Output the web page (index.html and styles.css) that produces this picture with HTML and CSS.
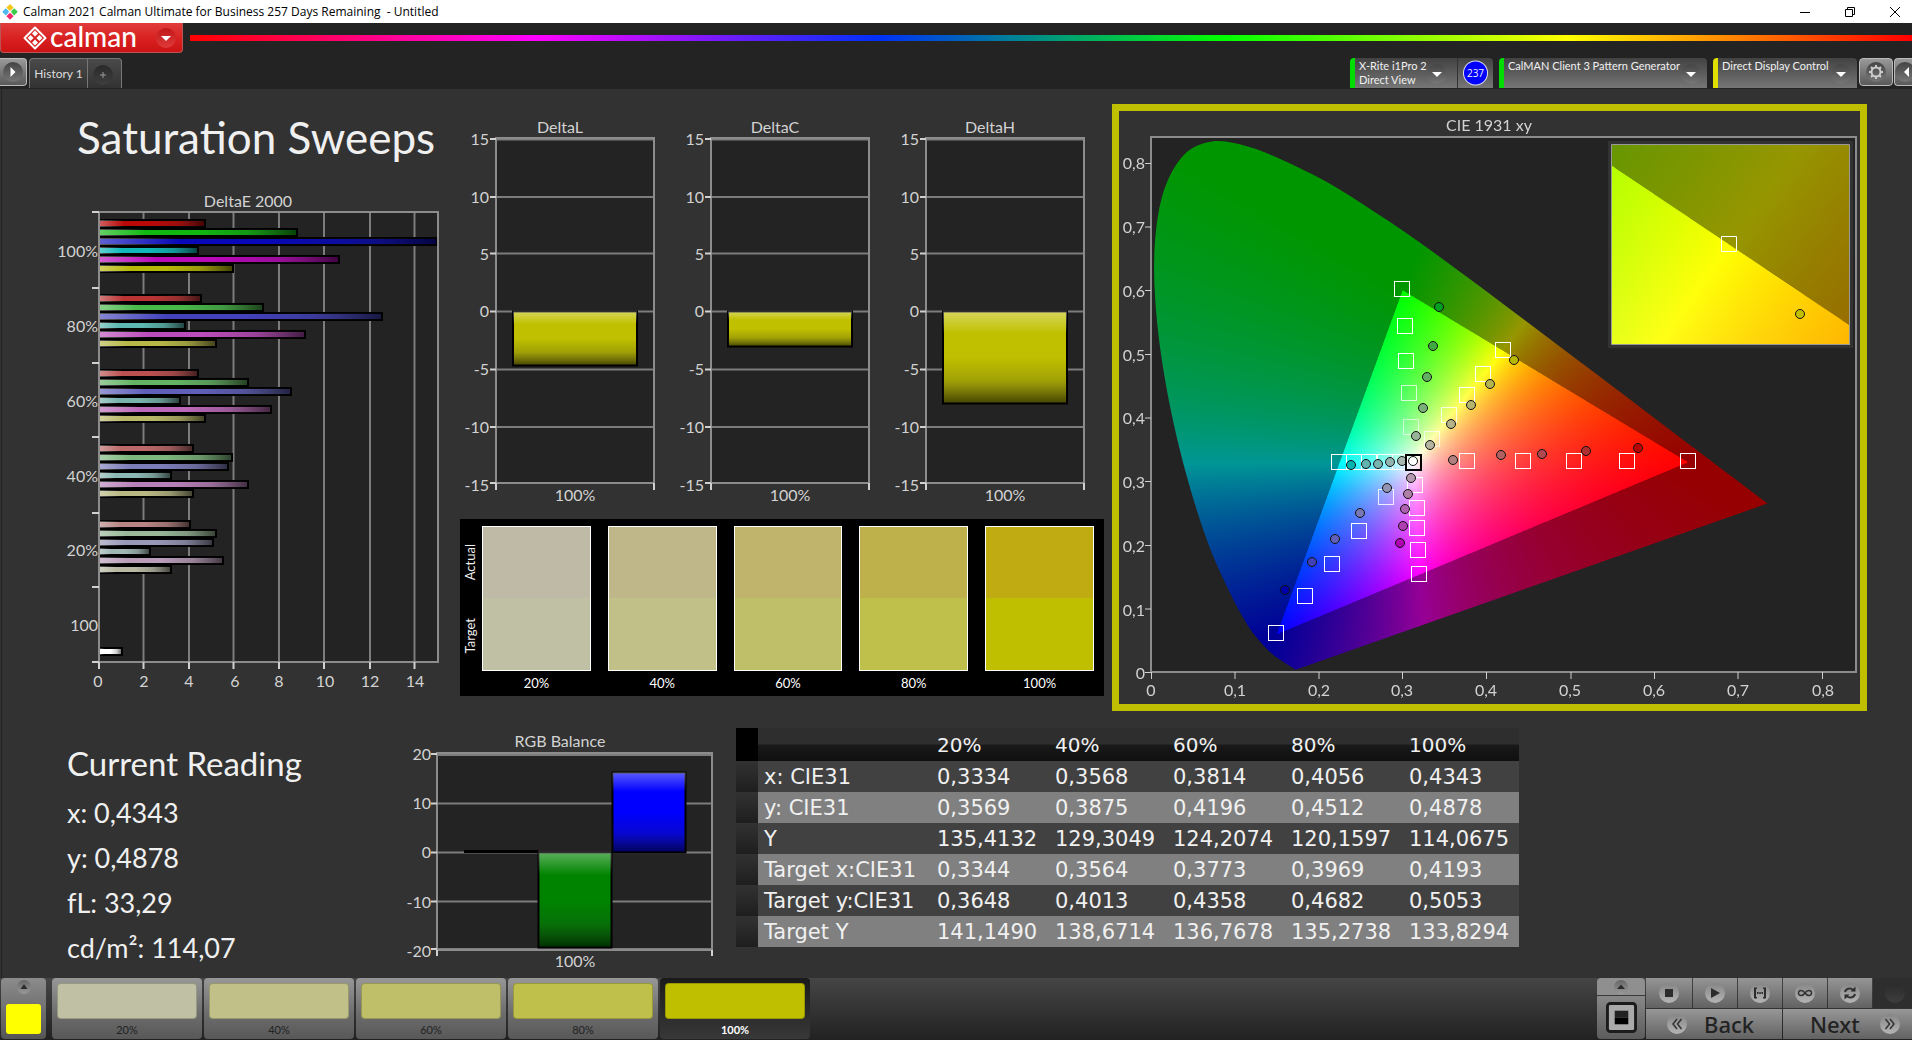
FILE: index.html
```html
<!DOCTYPE html>
<html lang="en">
<head>
<meta charset="utf-8">
<title>Calman 2021 - Untitled</title>
<link rel="stylesheet" href="styles.css">
</head>
<body>
<header class="titlebar">
  <svg class="app-icon" viewBox="0 0 16 16" aria-hidden="true">
    <path fill="#f5c518" d="M8 0l3.600 3.600L8 7.200 4.400 3.600z"/><path fill="#4fb8f0" d="M3.800 4.200L7.400 7.800 3.800 11.400.2 7.800z"/>
    <path fill="#3ccb4a" d="M12.200 4.200l3.600 3.600-3.600 3.600-3.600-3.600z"/><path fill="#f0286e" d="M8 8.600l3.600 3.600L8 15.800l-3.600-3.600z"/>
    <path fill="#fff" d="M8 6.200l1.700 1.700L8 9.600 6.300 7.900z"/>
  </svg>
  <h1 class="window-title">Calman 2021 Calman Ultimate for Business 257 Days Remaining&nbsp; - Untitled</h1>
  <div class="window-controls">
    <button class="window-button" aria-label="Minimize"><svg viewBox="0 0 12 12"><path d="M1 6.500h10"/></svg></button>
    <button class="window-button" aria-label="Restore"><svg viewBox="0 0 12 12"><path d="M1.500 3.500h7v7h-7zM3.500 3.500v-2h7v7h-2"/></svg></button>
    <button class="window-button" aria-label="Close"><svg viewBox="0 0 12 12"><path d="M1 1l10 10M11 1L1 11"/></svg></button>
  </div>
</header>

<div class="brandbar">
  <button class="brand">
    <svg class="brand-mark" viewBox="0 0 24 24" aria-hidden="true">
      <path d="M12 1.500L22.500 12 12 22.500 1.500 12z" fill="none" stroke="#fff" stroke-width="2" stroke-linejoin="round"/>
      <path fill="#fff" d="M12 4.500l3 3-3 3-3-3zM7.600 9l3 3-3 3-3-3zM16.400 9l3 3-3 3-3-3zM12 13.500l3 3-3 3-3-3z"/>
    </svg>
    <span class="brand-name">calman</span>
    <span class="disc disc-red"><svg viewBox="0 0 20 20"><path d="M5 8h10l-5 5z"/></svg></span>
  </button>
  <div class="rainbow"></div>
</div>

<nav class="toolbar">
  <button class="edge-button" aria-label="Show panel"><span class="disc"><svg viewBox="0 0 20 20"><path d="M7.500 5l5 5-5 5z"/></svg></span></button>
  <div class="tabs">
    <button class="tab">History 1</button>
    <button class="tab tab-add" aria-label="Add history"><span class="disc disc-dark"><svg viewBox="0 0 20 20"><path d="M9.500 7h1v2.500H13v1h-2.500V13h-1v-2.500H7v-1h2.500z"/></svg></span></button>
  </div>
  <div class="devices">
    <div class="device device-meter">
      <button class="device-main"><span class="device-name">X-Rite i1Pro 2<br>Direct View</span><span class="disc"><svg viewBox="0 0 20 20"><path d="M5 8h10l-5 5z"/></svg></span></button>
      <span class="meter-count">237</span>
    </div>
    <div class="device device-source">
      <button class="device-main"><span class="device-name">CalMAN Client 3 Pattern Generator</span><span class="disc"><svg viewBox="0 0 20 20"><path d="M5 8h10l-5 5z"/></svg></span></button>
    </div>
    <div class="device device-display">
      <button class="device-main"><span class="device-name">Direct Display Control</span><span class="disc"><svg viewBox="0 0 20 20"><path d="M5 8h10l-5 5z"/></svg></span></button>
    </div>
    <div class="edge-group">
      <button class="square-button" aria-label="Settings"><span class="disc"><svg viewBox="0 0 20 20"><circle cx="10" cy="10" r="4.500" fill="none" stroke="#ccc" stroke-width="2"/><path fill="none" stroke="#ccc" stroke-width="2" d="M10 3v2M10 15v2M3 10h2M15 10h2M5 5l1.500 1.500M13.500 13.500L15 15M5 15l1.500-1.500M13.500 6.500L15 5"/></svg></span></button>
      <button class="square-button square-cut" aria-label="Expand"><span class="disc"><svg viewBox="0 0 20 20"><path d="M14 5l-5 5 5 5z"/></svg></span></button>
    </div>
  </div>
</nav>

<main class="workspace">
  <div class="row row-top">
    <section class="col-sweeps">
      <h2 class="page-title">Saturation Sweeps</h2>
      <svg class="chart" id="delta-e" viewBox="0 0 404 512" role="img" aria-label="DeltaE 2000">
        <text class="t mid" x="192" y="19">DeltaE 2000</text>
        <rect class="plot" x="43" y="24" width="339" height="450"/>
        <path class="grid" d="M87.500 24v450M133 24v450M177.500 24v450M223 24v450M268 24v450M314 24v450M358.500 24v450"/>
        <g id="delta-e-bars"></g>
        <path class="frame" d="M43 24h339v450H43z"/>
        <path class="tick" d="M36 24h7M36 100h7M36 175h7M36 249h7M36 325h7M36 399h7M36 474h7M43 474v7M87.500 474v7M133 474v7M177.500 474v7M223 474v7M268 474v7M314 474v7M358.500 474v7"/>
        <g class="t end"><text x="42" y="69">100%</text><text x="42" y="144">80%</text><text x="42" y="219">60%</text><text x="42" y="294">40%</text><text x="42" y="368">20%</text><text x="42" y="443">100</text></g>
        <g class="t mid"><text x="42" y="499">0</text><text x="88" y="499">2</text><text x="133" y="499">4</text><text x="179" y="499">6</text><text x="223" y="499">8</text><text x="269" y="499">10</text><text x="314" y="499">12</text><text x="359" y="499">14</text></g>
      </svg>
    </section>

    <section class="col-deltas">
      <div class="deltas">
        <svg class="chart" viewBox="0 0 215 392" role="img" aria-label="DeltaL">
          <text class="t mid" x="100" y="19">DeltaL</text>
          <rect class="plot" x="35.500" y="24" width="158" height="345"/>
          <path class="grid" d="M36 25.500h158M36 83h158M36 139.500h158M36 197.500h158M36 255.500h158M36 313h158"/>
          <rect class="bar" fill="#c0c000" x="53" y="197.500" width="124" height="54"/><rect fill="url(#shade-v)" x="53" y="197.500" width="124" height="54"/>
          <path class="frame" d="M36 24h158v345H36z"/>
          <path class="tick" d="M30 25h6M30 83h6M30 139.500h6M30 197.500h6M30 255.500h6M30 313h6M30 369h6M36 369v7M194 369v7"/>
          <g class="t end"><text x="29" y="31">15</text><text x="29" y="89">10</text><text x="29" y="146">5</text><text x="29" y="203">0</text><text x="29" y="261">-5</text><text x="29" y="319">-10</text><text x="29" y="377">-15</text></g>
          <text class="t mid" x="115" y="387">100%</text>
        </svg>
        <svg class="chart" viewBox="0 0 215 392" role="img" aria-label="DeltaC">
          <text class="t mid" x="100" y="19">DeltaC</text>
          <rect class="plot" x="35.500" y="24" width="158" height="345"/>
          <path class="grid" d="M36 25.500h158M36 83h158M36 139.500h158M36 197.500h158M36 255.500h158M36 313h158"/>
          <rect class="bar" fill="#c0c000" x="53" y="197.500" width="124" height="35"/><rect fill="url(#shade-v)" x="53" y="197.500" width="124" height="35"/>
          <path class="frame" d="M36 24h158v345H36z"/>
          <path class="tick" d="M30 25h6M30 83h6M30 139.500h6M30 197.500h6M30 255.500h6M30 313h6M30 369h6M36 369v7M194 369v7"/>
          <g class="t end"><text x="29" y="31">15</text><text x="29" y="89">10</text><text x="29" y="146">5</text><text x="29" y="203">0</text><text x="29" y="261">-5</text><text x="29" y="319">-10</text><text x="29" y="377">-15</text></g>
          <text class="t mid" x="115" y="387">100%</text>
        </svg>
        <svg class="chart" viewBox="0 0 215 392" role="img" aria-label="DeltaH">
          <text class="t mid" x="100" y="19">DeltaH</text>
          <rect class="plot" x="35.500" y="24" width="158" height="345"/>
          <path class="grid" d="M36 25.500h158M36 83h158M36 139.500h158M36 197.500h158M36 255.500h158M36 313h158"/>
          <rect class="bar" fill="#c0c000" x="53" y="197.500" width="124" height="92"/><rect fill="url(#shade-v)" x="53" y="197.500" width="124" height="92"/>
          <path class="frame" d="M36 24h158v345H36z"/>
          <path class="tick" d="M30 25h6M30 83h6M30 139.500h6M30 197.500h6M30 255.500h6M30 313h6M30 369h6M36 369v7M194 369v7"/>
          <g class="t end"><text x="29" y="31">15</text><text x="29" y="89">10</text><text x="29" y="146">5</text><text x="29" y="203">0</text><text x="29" y="261">-5</text><text x="29" y="319">-10</text><text x="29" y="377">-15</text></g>
          <text class="t mid" x="115" y="387">100%</text>
        </svg>
      </div>
      <div class="compare">
        <div class="compare-axis"><span>Actual</span><span>Target</span></div>
        <div class="swatches">
          <figure class="swatch"><div class="swatch-pair s20"></div><figcaption>20%</figcaption></figure>
          <figure class="swatch"><div class="swatch-pair s40"></div><figcaption>40%</figcaption></figure>
          <figure class="swatch"><div class="swatch-pair s60"></div><figcaption>60%</figcaption></figure>
          <figure class="swatch"><div class="swatch-pair s80"></div><figcaption>80%</figcaption></figure>
          <figure class="swatch"><div class="swatch-pair s100"></div><figcaption>100%</figcaption></figure>
        </div>
      </div>
    </section>

    <section class="cie">
      <canvas class="cie-layer" id="gamut" width="741" height="593"></canvas>
      <svg class="cie-layer chart" viewBox="0 0 741 593" role="img" aria-label="CIE 1931 xy">
        <text class="t mid" x="370" y="20">CIE 1931 xy</text>
        <path class="frame" d="M32 26h705v535H32z"/>
        <path class="tick thin" d="M26 52.500h6M26 116h6M26 179.500h6M26 243.500h6M26 307h6M26 370.500h6M26 434.500h6M26 498h6M26 561.500h6M32.500 561v7M116 561v7M200 561v7M283.500 561v7M367.500 561v7M452 561v7M535.500 561v7M619 561v7M703.500 561v7"/>
        <g class="t end"><text x="26" y="58">0,8</text><text x="26" y="122">0,7</text><text x="26" y="186">0,6</text><text x="26" y="250">0,5</text><text x="26" y="313">0,4</text><text x="26" y="377">0,3</text><text x="26" y="441">0,2</text><text x="26" y="505">0,1</text><text x="26" y="568">0</text></g>
        <g class="t mid"><text x="32" y="585">0</text><text x="116" y="585">0,1</text><text x="200" y="585">0,2</text><text x="283" y="585">0,3</text><text x="367" y="585">0,4</text><text x="451" y="585">0,5</text><text x="535" y="585">0,6</text><text x="619" y="585">0,7</text><text x="704" y="585">0,8</text></g>
        <g id="cie-points"></g>
        <path class="inset-frame" d="M492.500 33.500h238v200h-238z"/>
        <path class="target" d="M602.500 125.500h15v15h-15z"/>
        <circle class="actual" cx="681" cy="203" r="4.500" fill="#c0c000"/>
      </svg>
    </section>
  </div>

  <div class="row row-bottom">
    <section class="reading">
      <h2 class="reading-title">Current Reading</h2>
      <p>x: 0,4343</p>
      <p>y: 0,4878</p>
      <p>fL: 33,29</p>
      <p>cd/m²: 114,07</p>
    </section>
    <svg class="chart rgb-balance" viewBox="0 0 320 242" role="img" aria-label="RGB Balance">
      <text class="t mid" x="160" y="17">RGB Balance</text>
      <rect class="plot" x="37" y="23" width="275" height="197"/>
      <path class="grid" d="M37 25h275M37 73.500h275M37 122.500h275M37 171.500h275M37 219h275"/>
      <path d="M64 121.500h74" stroke="#000" stroke-width="3"/>
      <rect class="bar" fill="#008400" x="138.500" y="122.500" width="73" height="95"/><rect fill="url(#shade-v)" x="138.500" y="122.500" width="73" height="95"/>
      <rect class="bar" fill="#0000ff" x="212.500" y="42.500" width="73" height="80"/><rect fill="url(#shade-v)" x="212.500" y="42.500" width="73" height="80"/>
      <path class="frame" d="M37 23h275v197H37z"/>
      <path class="tick" d="M31 24h6M31 73.500h6M31 122.500h6M31 171.500h6M31 219h6M37 220v6M312 220v6"/>
      <g class="t end"><text x="31" y="30">20</text><text x="31" y="79">10</text><text x="31" y="128">0</text><text x="31" y="178">-10</text><text x="31" y="227">-20</text></g>
      <text class="t mid" x="175" y="237">100%</text>
    </svg>
    <table class="data">
      <thead>
        <tr><td class="grip"></td><th></th><th scope="col">20%</th><th scope="col">40%</th><th scope="col">60%</th><th scope="col">80%</th><th scope="col">100%</th></tr>
      </thead>
      <tbody>
        <tr><td class="grip"></td><th scope="row">x: CIE31</th><td>0,3334</td><td>0,3568</td><td>0,3814</td><td>0,4056</td><td>0,4343</td></tr>
        <tr><td class="grip"></td><th scope="row">y: CIE31</th><td>0,3569</td><td>0,3875</td><td>0,4196</td><td>0,4512</td><td>0,4878</td></tr>
        <tr><td class="grip"></td><th scope="row">Y</th><td>135,4132</td><td>129,3049</td><td>124,2074</td><td>120,1597</td><td>114,0675</td></tr>
        <tr><td class="grip"></td><th scope="row">Target x:CIE31</th><td>0,3344</td><td>0,3564</td><td>0,3773</td><td>0,3969</td><td>0,4193</td></tr>
        <tr><td class="grip"></td><th scope="row">Target y:CIE31</th><td>0,3648</td><td>0,4013</td><td>0,4358</td><td>0,4682</td><td>0,5053</td></tr>
        <tr><td class="grip"></td><th scope="row">Target Y</th><td>141,1490</td><td>138,6714</td><td>136,7678</td><td>135,2738</td><td>133,8294</td></tr>
      </tbody>
    </table>
  </div>
</main>

<footer class="dock">
  <button class="dock-current" aria-label="Current color"><span class="disc disc-small"><svg viewBox="0 0 20 20"><path d="M3 14L10 4l7 10z"/></svg></span><span class="current-color"></span></button>
  <div class="patches">
    <button class="patch"><span class="patch-color p20"></span>20%</button>
    <button class="patch"><span class="patch-color p40"></span>40%</button>
    <button class="patch"><span class="patch-color p60"></span>60%</button>
    <button class="patch"><span class="patch-color p80"></span>80%</button>
    <button class="patch patch-active"><span class="patch-color p100"></span>100%</button>
  </div>
  <div class="window-size">
    <button class="size-up" aria-label="More"><span class="disc disc-small"><svg viewBox="0 0 20 20"><path d="M2 14L10 5l8 9z"/></svg></span></button>
    <button class="size-main" aria-label="Pattern window"><svg viewBox="0 0 32 32"><rect x="1.500" y="1.500" width="29" height="29" rx="3" fill="#aaa" stroke="#1c1c1c" stroke-width="3"/><path fill="#222" d="M9 9h14v7H9z"/><path fill="#000" d="M9 16h14v7H9z"/></svg></button>
  </div>
  <div class="transport">
    <div class="transport-icons">
      <button class="icon-button" aria-label="Stop"><span class="disc disc-light"><svg viewBox="0 0 20 20"><path d="M6 6h8v8H6z"/></svg></span></button>
      <button class="icon-button" aria-label="Play"><span class="disc disc-light"><svg viewBox="0 0 20 20"><path d="M6 5l9 5-9 5z"/></svg></span></button>
      <button class="icon-button" aria-label="Range"><span class="disc disc-light"><svg viewBox="0 0 20 20"><path d="M4 4.500h3V6H6v8h1v1.500H4zM16 4.500h-3V6h1v8h-1v1.500h3zM7 9h1.500v2H7zM9.300 9h1.500v2H9.300zM11.500 9H13v2h-1.500z"/></svg></span></button>
      <button class="icon-button" aria-label="Continuous"><span class="disc disc-light"><svg viewBox="0 0 20 20"><path fill="none" stroke="#333" stroke-width="1.500" d="M10 10C8 7 3.500 6.500 3.500 10S8 13 10 10s6.500-3.500 6.500 0S12 13 10 10z"/></svg></span></button>
      <button class="icon-button" aria-label="Refresh"><span class="disc disc-light"><svg viewBox="0 0 20 20"><path fill="none" stroke="#333" stroke-width="2" d="M5 9c.5-3 5-5 8.500-2M15 11c-.5 3-5 5-8.500 2"/><path d="M15.500 3.500v5h-5zM4.500 16.500v-5h5z"/></svg></span></button>
      <span class="icon-blank"><span class="disc disc-dark"></span></span>
    </div>
    <div class="transport-nav">
      <button class="nav-button nav-back"><span class="disc disc-light"><svg viewBox="0 0 20 20"><path fill="none" stroke="#333" stroke-width="1.500" d="M10 5l-4 5 4 5M14.500 5l-4 5 4 5"/></svg></span>Back</button>
      <button class="nav-button nav-next">Next<span class="disc disc-light"><svg viewBox="0 0 20 20"><path fill="none" stroke="#333" stroke-width="1.500" d="M5.500 5l4 5-4 5M10 5l4 5-4 5"/></svg></span></button>
    </div>
  </div>
</footer>

<svg class="defs" aria-hidden="true">
  <defs>
    <linearGradient id="shade-v" x1="0" y1="0" x2="0" y2="1"><stop offset="0" stop-color="#fff" stop-opacity=".36"/><stop offset=".24" stop-color="#fff" stop-opacity="0"/><stop offset=".5" stop-color="#222" stop-opacity="0"/><stop offset=".75" stop-color="#222" stop-opacity=".2"/><stop offset="1" stop-color="#000" stop-opacity=".65"/></linearGradient>
    <linearGradient id="shade-h"><stop offset="0" stop-color="#fff" stop-opacity=".36"/><stop offset=".24" stop-color="#fff" stop-opacity="0"/><stop offset=".5" stop-color="#222" stop-opacity="0"/><stop offset=".75" stop-color="#222" stop-opacity=".2"/><stop offset="1" stop-color="#000" stop-opacity=".65"/></linearGradient>
  </defs>
</svg>
<script src="charts.js"></script>
</body>
</html>
```
FILE: styles.css
```css
* { box-sizing: border-box; }

body {
  margin: 0;
  min-height: 100vh;
  display: flex;
  flex-direction: column;
  background: #323232;
  color: #f0f0f0;
  font-family: Lato, "Open Sans", sans-serif;
  overflow-x: hidden;
}

button {
  margin: 0;
  padding: 0;
  border: 0;
  background: none;
  color: inherit;
  font: inherit;
}

h1, h2, p, figure { margin: 0; font-weight: 400; }
.defs { position: absolute; width: 0; height: 0; }

/* Window title bar */
.titlebar {
  display: flex;
  align-items: center;
  height: 23px;
  padding-left: 2px;
  background: #fff;
  color: #000;
}
.app-icon { width: 16px; height: 16px; }
.window-title {
  flex: 1;
  margin-left: 5px;
  font: 12px/20px "Open Sans", sans-serif;
}
.window-controls { display: flex; margin-right: -5px; }
.window-button { width: 45px; height: 20px; display: grid; place-items: center; }
.window-button svg { width: 12px; height: 12px; fill: none; stroke: #000; }

/* Brand button and rainbow line */
.brandbar {
  display: flex;
  align-items: center;
  gap: 7px;
  height: 35px;
  padding-bottom: 5px;
  background: #232323;
}
.brand {
  display: flex;
  align-items: center;
  width: 183px;
  height: 30px;
  padding: 0 6px 0 22px;
  border: 1px solid #b55;
  border-top: 0;
  border-radius: 0 0 4px 4px;
  background: linear-gradient(#e03c3c, #d81e1e 60%, #cc1414);
  color: #fff;
}
.brand-mark { width: 24px; height: 24px; }
.brand-name { flex: 1; margin-left: 3px; font: 500 28px/26px Lato, sans-serif; text-align: left; padding-bottom: 4px; }
.rainbow {
  flex: 1;
  height: 6px;
  background: linear-gradient(90deg, #f00, #f0f 20%, #0030f8 40%, #0f0 60%, #ff0 80%, #f00);
}

/* Round icon wells */
.disc {
  flex: none;
  display: grid;
  place-items: center;
  width: 20px;
  height: 20px;
  border-radius: 50%;
  background: linear-gradient(#444, #777);
}
.disc svg { width: 20px; height: 20px; fill: #fff; }
.disc-red { background: linear-gradient(#c01818, #e03a3a); }
.disc-dark { background: linear-gradient(#2a2a2a, #3e3e3e); }
.disc-dark svg { fill: #999; }
.disc-light { background: linear-gradient(#858585, #b5b5b5); }
.disc-light svg { fill: #2c2c2c; }
.disc-small { width: 14px; height: 14px; background: linear-gradient(#666, #999); }
.disc-small svg { width: 10px; height: 10px; fill: #2c2c2c; }

/* Tab and device toolbar */
.toolbar {
  display: flex;
  align-items: flex-start;
  height: 31px;
  background: #232323;
}
.edge-button, .square-button {
  display: grid;
  place-items: center;
  width: 27px;
  height: 28px;
  border: 1px solid #bbb;
  border-left: 0;
  border-radius: 0 4px 4px 0;
  background: linear-gradient(#999, #5a5a5a);
}
.tabs {
  display: flex;
  height: 30px;
  margin-left: 2px;
  border: 1px solid #777;
  border-bottom: 0;
  border-radius: 4px 4px 0 0;
  background: linear-gradient(#4a4a4a, #323232);
}
.tab { width: 57px; font-size: 12px; color: #ddd; }
.tab-add { display: grid; place-items: center start; width: 34px; padding: 3px 0 0 5px; border-left: 1px solid #777; }
.devices { display: flex; gap: 6px; margin-left: auto; }
.device {
  display: flex;
  height: 30px;
  border-left: 5px solid #0d0;
  border-radius: 4px 4px 0 0;
  background: linear-gradient(#424242, #767676);
}
.device-main { display: flex; justify-content: space-between; width: 100%; padding: 1px 6px 0 4px; }
.device-main .disc { margin-top: 5px; }
.device-name { font-size: 11px; line-height: 14px; text-align: left; white-space: nowrap; }
.device-meter { width: 143px; }
.device-meter .device-main { padding-right: 10px; }
.device-source { width: 208px; }
.device-display { width: 144px; border-left-color: #e0e000; }
.meter-count {
  flex: none;
  width: 36px;
  padding: 9px 0;
  border-left: 1px solid #333;
  background: radial-gradient(circle at 50% 50%, #00f 0 11px, #dde 12px, transparent 13px);
  font: 10px/12px "Open Sans", sans-serif;
  text-align: center;
}
.edge-group { display: flex; gap: 1px; margin-left: -4px; }
.square-button { width: 34px; border-left: 1px solid #bbb; border-radius: 4px; }
.square-cut { width: 18px; border-right: 0; border-radius: 4px 0 0 4px; justify-items: start; overflow: hidden; }

/* Workspace */
.workspace { flex: 1; border-left: 1px solid #222; margin-left: 1px; }
.row { display: grid; }
.row > * { min-width: 0; }
.row-top { grid-template-columns: 458fr 652fr 755fr 45fr; align-items: start; }
.row-bottom { grid-template-columns: 398fr 320fr 16fr 783fr 393fr; align-items: start; }
.chart { display: block; width: 100%; height: auto; }

.col-sweeps { padding-left: 54px; }
.page-title { height: 99px; padding: 23px 0 0 21px; font-size: 44px; line-height: 50px; white-space: nowrap; }

.col-deltas { padding-top: 25px; }
.deltas { display: grid; grid-template-columns: repeat(3, 1fr); padding-right: 7px; }

.t { fill: #d2d2d2; font-size: 16px; }
.mid { text-anchor: middle; }
.end { text-anchor: end; }
.plot { fill: #232323; }
.frame { fill: none; stroke: #8c8c8c; stroke-width: 2; }
.grid { fill: none; stroke: #7c7c7c; stroke-width: 2; }
.tick { fill: none; stroke: #d0d0d0; stroke-width: 2; }
.thin { stroke-width: 1; }
.bar { stroke: #000; stroke-width: 2; }

.compare {
  display: flex;
  margin: 13px 8px 0 0;
  padding: 7px 10px 0 0;
  height: 177px;
  background: #000;
}
.compare-axis { display: grid; grid-template-rows: 1fr 1fr; flex: none; width: 22px; height: 146px; padding: 0 3px 0 1px; place-items: center; font-size: 13px; }
.compare-axis span { writing-mode: vertical-rl; transform: rotate(180deg); }
.swatches { flex: 1; display: grid; grid-template-columns: repeat(5, 1fr); gap: 17px; }
.swatch-pair { height: 145px; border: 1px solid #fff; }
.swatch figcaption { font-size: 13px; line-height: 24px; text-align: center; color: #fff; }
.s20 { background: linear-gradient(#bfbaa6 50%, #bfc0a4 50%); }
.s40 { background: linear-gradient(#bfb78a 50%, #c0c088 50%); }
.s60 { background: linear-gradient(#c0b46d 50%, #bfbf6a 50%); }
.s80 { background: linear-gradient(#beb14b 50%, #bfc04b 50%); }
.s100 { background: linear-gradient(#c0ab12 50%, #bfbf00 50%); }

.cie {
  display: grid;
  margin-top: 15px;
  border: 7px solid #bfbf00;
}
.cie-layer { grid-area: 1 / 1; width: 100%; height: auto; display: block; }
.target { fill: none; stroke: #fff; stroke-width: 1; }
.white-target { fill: none; stroke: #000; stroke-width: 2; }
.actual { stroke: #111; stroke-width: 1; }
.inset-frame { fill: none; stroke: #999; stroke-width: 1; }

.reading { padding-left: 65px; padding-top: 28px; }
.reading p { font-size: 27px; line-height: 45px; }
.reading-title { font-size: 33px; line-height: 48px; padding-bottom: 3px; }
.rgb-balance { margin-top: 19px; }

.data {
  grid-column: 4;
  width: 100%;
  margin-top: 17px;
  border-collapse: collapse;
  table-layout: fixed;
  font: 21px/24px "DejaVu Sans", sans-serif;
}
.data th, .data td { height: 31px; padding: 0 0 0 8px; font-weight: 400; text-align: left; white-space: nowrap; }
.data thead th { height: 33px; width: 118px; font-size: 20px; background: linear-gradient(#2e2e2e 48%, #191919 52%, #0f0f0f); }
.data thead th:nth-child(2) { width: 171px; }
.data .grip { width: 22px; padding: 0; background: linear-gradient(#323232, #1e1e1e); }
.data thead .grip { background: #000; }
.data tbody tr { background: #414141; }
.data tbody tr:nth-child(even) { background: #808080; }
.data tbody th { padding-left: 6px; }

/* Bottom dock */
.dock {
  display: flex;
  height: 62px;
  padding: 0 0 1px 1px;
  background: linear-gradient(#454545, #222);
  color: #222;
}
.dock-current {
  display: flex;
  flex-direction: column;
  align-items: center;
  justify-content: space-between;
  width: 45px;
  padding: 2px 0 5px;
  border-radius: 4px;
  background: linear-gradient(#8c8c8c, #555);
}
.current-color { width: 35px; height: 30px; border-radius: 3px; background: #ff0; }
.patches { display: flex; gap: 2px; margin-left: 6px; }
.patch {
  display: flex;
  flex-direction: column;
  gap: 4px;
  width: 150px;
  padding: 5px 5px 0;
  border-radius: 4px;
  background: linear-gradient(#979797, #6c6c6c 60%, #585858);
  font-size: 11px;
  line-height: 14px;
  text-align: center;
}
.patch-color { height: 36px; border: 1px solid #0003; border-radius: 4px; }
.patch-active { background: linear-gradient(#1a1a1a, #383838); color: #fff; font-weight: 700; }
.p20 { background: #bfc0a4; }
.p40 { background: #c0c088; }
.p60 { background: #bfbf6a; }
.p80 { background: #bfc04b; }
.p100 { background: #bfbf00; }

.window-size { display: flex; flex-direction: column; gap: 1px; width: 48px; margin-left: auto; }
.size-up { display: grid; place-items: center; height: 17px; border-radius: 4px 4px 0 0; background: #8f8f8f; }
.size-main { display: grid; place-items: center; flex: 1; border-radius: 0 0 4px 4px; background: linear-gradient(#888, #5c5c5c); }
.size-main svg { width: 31px; height: 31px; }
.transport { display: flex; flex-direction: column; gap: 1px; width: 266px; margin-left: 1px; overflow: hidden; }
.transport-icons { display: flex; gap: 1px; height: 30px; }
.icon-button, .icon-blank { flex: none; width: 44px; display: grid; place-items: center; background: linear-gradient(#959595, #626262); }
.icon-button:first-child { width: 46px; }
.icon-blank { background: #2e2e2e; }
.transport-nav { display: flex; gap: 1px; flex: 1; }
.nav-button {
  display: flex;
  align-items: center;
  width: 136px;
  background: linear-gradient(#979797, #626262);
  font: 500 22px/28px "Noto Sans", sans-serif;
  color: #222;
}
.nav-back { gap: 17px; padding-left: 21px; }
.nav-next { flex: 1; justify-content: space-between; padding: 0 12px 0 27px; }
```
FILE: charts.js
```js
const SVG_NS = "http://www.w3.org/2000/svg";

function add(parent, name, attributes) {
  const node = document.createElementNS(SVG_NS, name);
  for (const key in attributes) node.setAttribute(key, attributes[key]);
  parent.appendChild(node);
}

/* DeltaE bars: group top, then [color, length] for R, G, B, C, M, Y */
const deltaE = [
  [32, ["#b80808", 107], ["#10b810", 199], ["#0808b8", 339], ["#10b8b8", 100], ["#b808b8", 241], ["#b8b808", 135]],
  [107, ["#bb3434", 103], ["#48b848", 165], ["#4242bb", 284], ["#5cb8b0", 87], ["#bb4cbb", 207], ["#b8b848", 118]],
  [182, ["#bb5050", 100], ["#64b464", 150], ["#6060bb", 193], ["#78b4ac", 82], ["#bb68b8", 173], ["#b8b868", 107]],
  [257, ["#bb6868", 95], ["#7cb87c", 134], ["#7c7cb8", 130], ["#8cb8b4", 73], ["#b880b8", 150], ["#b8b884", 95]],
  [333, ["#b88484", 92], ["#98b898", 118], ["#9898b8", 115], ["#a0b8b4", 52], ["#b89cb8", 125], ["#b8b8a4", 73]],
  [460, ["#ffffff", 24]]
];
const barLayer = document.getElementById("delta-e-bars");
for (const [top, ...bars] of deltaE) {
  bars.forEach(([color, length], i) => {
    const box = { x: 43, y: top + i * 9, width: length - 1, height: 7 };
    add(barLayer, "rect", { ...box, class: "bar", fill: color });
    add(barLayer, "rect", { ...box, fill: "url(#shade-h)" });
  });
}

/* Target squares and measured dots on the chromaticity plot */
const targets = [
  [283, 178], [286, 215], [287, 250], [290, 282, .75], [292, 316, .6],
  [384, 239], [364, 263], [348, 284], [330, 304, .8], [313, 328, .7],
  [569, 350], [508, 350], [455, 350], [404, 350], [348, 350],
  [220, 351], [235, 351], [250, 351], [266, 351], [281, 351],
  [296, 374], [298, 397], [298, 417], [299, 439], [300, 463],
  [267, 386, .85], [240, 420], [213, 453], [186, 485], [157, 522]
];
const actuals = [
  [320, 196, "#00a020"], [314, 235, "#40a840"], [308, 266, "#60b060"], [304, 297, "#78b078"], [297, 325, "#98b498"],
  [395, 249, "#b8b800"], [371, 273, "#b4b450"], [352, 294, "#b4b46c"], [332, 313, "#b4b488"], [311, 334, "#b4b4a0"],
  [519, 337, "#b80000"], [467, 340, "#b03030"], [423, 343, "#b04850"], [382, 344, "#b06060"], [334, 349, "#b08080"],
  [232, 354, "#00b4b0"], [247, 353, "#60b4b0"], [259, 353, "#78b4b0"], [271, 351, "#90b4b0"], [283, 350, "#a4b8b0"],
  [292, 367, "#b898b0"], [289, 383, "#b080a8"], [286, 398, "#b060b0"], [284, 415, "#b040b0"], [281, 432, "#b000b0"],
  [268, 377, "#9494b4"], [241, 402, "#7878b4"], [216, 428, "#6060b8"], [193, 451, "#4040b8"], [166, 479, "#0000a8"]
];
const points = document.getElementById("cie-points");
for (const [x, y, opacity = 1] of targets) {
  add(points, "rect", { x: x - 7.5, y: y - 7.5, width: 15, height: 15, class: "target", opacity });
}
for (const [cx, cy, fill] of actuals) add(points, "circle", { cx, cy, r: 4.5, fill, class: "actual" });
add(points, "rect", { x: 287, y: 344, width: 15, height: 15, class: "white-target" });
add(points, "circle", { cx: 294, cy: 350, r: 4.5, fill: "#fff", class: "actual" });

/* Spectral locus with Rec.709 gamut colors */
const locus = [
  [.1741, .0050], [.1714, .0051], [.1644, .0109], [.1566, .0177], [.1440, .0297], [.1241, .0578], [.1096, .0868],
  [.0913, .1327], [.0687, .2007], [.0454, .2950], [.0235, .4127], [.0082, .5384], [.0039, .6548], [.0139, .7502],
  [.0389, .8120], [.0743, .8338], [.1142, .8262], [.1547, .8059], [.1929, .7816], [.2296, .7543], [.3016, .6923],
  [.3731, .6245], [.4441, .5547], [.5125, .4866], [.5752, .4242], [.6270, .3725], [.6658, .3340], [.6915, .3083],
  [.7190, .2809], [.7347, .2653]
];

function gamutColor(x, y) {
  const X = x / y, Z = (1 - x - y) / y;
  const rgb = [
    3.2406 * X - 1.5372 - .4986 * Z,
    -.9689 * X + 1.8758 + .0415 * Z,
    .0557 * X - .204 + 1.057 * Z
  ];
  const level = Math.min(...rgb) < 0 ? 150 : 255;
  const peak = Math.max(...rgb);
  return rgb.map(v => Math.max(0, v) / peak * level);
}

function paint(width, height, toXY) {
  const layer = document.createElement("canvas");
  layer.width = width;
  layer.height = height;
  const ctx = layer.getContext("2d");
  const image = ctx.createImageData(width, height);
  for (let py = 0; py < height; py++) {
    for (let px = 0; px < width; px++) {
      /* 2x2 samples soften the gamut edge */
      const sum = [0, 0, 0];
      for (const [sx, sy] of [[.25, .25], [.75, .25], [.25, .75], [.75, .75]]) {
        const [x, y] = toXY(px + sx, py + sy);
        gamutColor(x, Math.max(y, .0001)).forEach((v, i) => { sum[i] += v / 4; });
      }
      image.data.set([...sum, 255], (py * width + px) * 4);
    }
  }
  ctx.putImageData(image, 0, 0);
  return layer;
}

const ctx = document.getElementById("gamut").getContext("2d");
ctx.fillStyle = "#232323";
ctx.fillRect(32, 26, 705, 535);

const px = locus.map(([x, y]) => [32 + x * 839, 561.5 - y * 637]);
ctx.save();
ctx.beginPath();
ctx.moveTo(...px[0]);
for (let i = 0; i < px.length - 1; i++) {
  const a = px[Math.max(i - 1, 0)], b = px[i], c = px[i + 1], d = px[Math.min(i + 2, px.length - 1)];
  ctx.bezierCurveTo(b[0] + (c[0] - a[0]) / 6, b[1] + (c[1] - a[1]) / 6, c[0] - (d[0] - b[0]) / 6, c[1] - (d[1] - b[1]) / 6, c[0], c[1]);
}
ctx.closePath();
ctx.clip();
ctx.drawImage(paint(705, 535, (x, y) => [x / 839, (535.5 - y) / 637]), 32, 26);
ctx.restore();

/* Magnified view around the 100% yellow target */
ctx.fillStyle = "#323232";
ctx.fillRect(489, 30, 245, 207);
ctx.drawImage(paint(238, 200, (x, y) => [.4193 + (x - 118) / 4733, .5053 - (y - 100) / 4000]), 493, 34);
```
